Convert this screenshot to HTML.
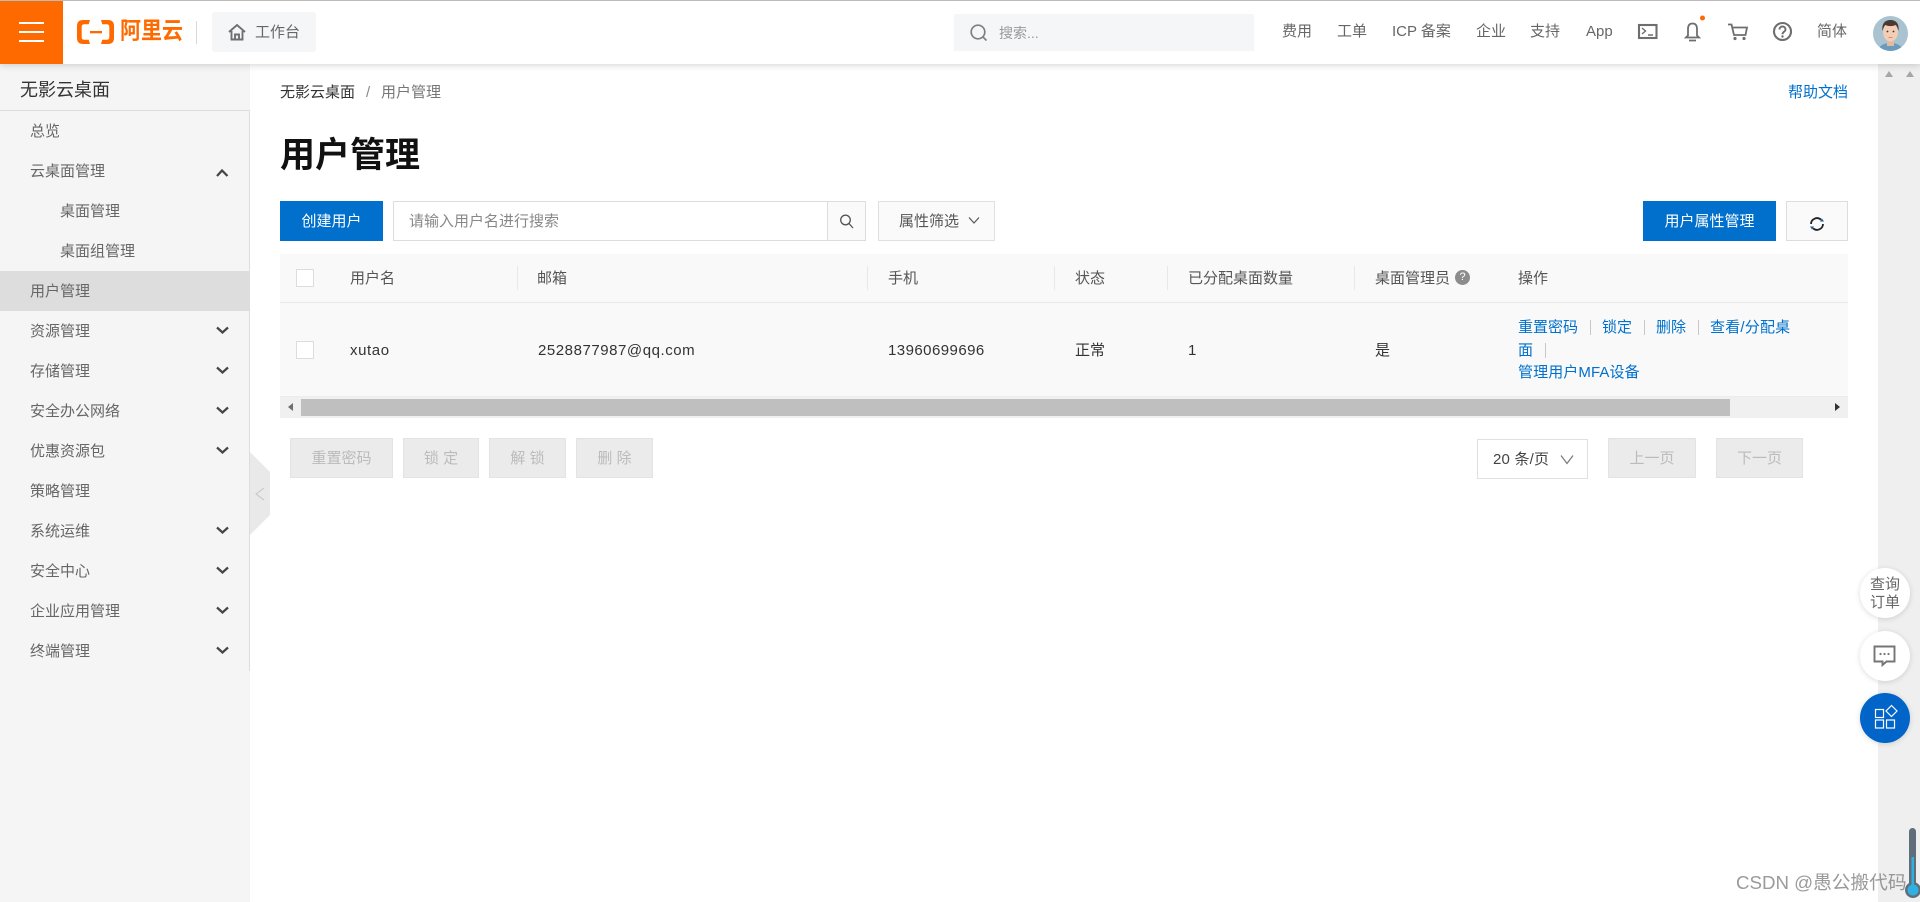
<!DOCTYPE html>
<html lang="zh-CN">
<head>
<meta charset="utf-8">
<title>用户管理</title>
<style>
*{box-sizing:border-box}
html,body{margin:0;padding:0;width:1920px;height:902px;overflow:hidden;background:#fff}
body{position:relative;font-family:"Liberation Sans","Noto Sans CJK SC",sans-serif;font-size:15px;color:#333}
.a{position:absolute}
.t{position:absolute;line-height:20px;height:20px;white-space:nowrap;margin-top:1px}
.b{position:absolute;text-align:center;white-space:nowrap;line-height:40px;height:40px;border:1px solid #e0e0e0}
.m{color:#666;left:30px}
.n{color:#666;top:21px}
.h{color:#555;top:268px}
.r{color:#333;top:340px}
.l{color:#0070cc}
.g{color:#aaa}
.sep{position:absolute;top:266px;width:1px;height:24px;background:#e8e8e8}
.dis{background:#ebebeb;border-color:#e3e3e3;color:#bbb}
.fab{position:absolute;left:1860px;width:50px;height:50px;border-radius:50%;background:#fff;box-shadow:0 1px 6px rgba(0,0,0,.14)}
</style>
</head>
<body>
<!-- right scroll strip -->
<div class="a" style="left:1878px;top:0;width:42px;height:902px;background:#efefef"></div>
<div class="a" style="left:1885px;top:71px;width:0;height:0;border:4.500px solid transparent;border-top:0;border-bottom:6px solid #a6a6a6"></div>
<div class="a" style="left:1906px;top:71px;width:0;height:0;border:4.500px solid transparent;border-top:0;border-bottom:6px solid #a6a6a6"></div>

<!-- sidebar -->
<div class="a" style="left:0;top:64px;width:250px;height:838px;background:#f5f5f5"></div>
<div class="a" style="left:249px;top:110px;width:1px;height:561px;background:#ddd"></div>
<div class="a" style="left:0;top:110px;width:250px;height:1px;background:#ddd"></div>
<div class="a" style="left:0;top:271px;width:250px;height:40px;background:#ddd"></div>
<div class="t" style="left:20px;top:78px;font-size:18px;line-height:22px;height:22px;color:#333">无影云桌面</div>
<div class="t m" style="top:121px">总览</div>
<div class="t m" style="top:161px">云桌面管理</div>
<div class="t m" style="top:201px;left:60px">桌面管理</div>
<div class="t m" style="top:241px;left:60px">桌面组管理</div>
<div class="t m" style="top:281px">用户管理</div>
<div class="t m" style="top:321px">资源管理</div>
<div class="t m" style="top:361px">存储管理</div>
<div class="t m" style="top:401px">安全办公网络</div>
<div class="t m" style="top:441px">优惠资源包</div>
<div class="t m" style="top:481px">策略管理</div>
<div class="t m" style="top:521px">系统运维</div>
<div class="t m" style="top:561px">安全中心</div>
<div class="t m" style="top:601px">企业应用管理</div>
<div class="t m" style="top:641px">终端管理</div>
<svg class="a" style="left:0;top:0" width="260" height="680" fill="none" stroke="#444" stroke-width="2.200">
<path d="M217 176l5-5.500 5.500 5.500"/>
<path d="M217 327.500l5.500 5 5.500-5M217 367.500l5.500 5 5.500-5M217 407.500l5.500 5 5.500-5M217 447.500l5.500 5 5.500-5M217 527.500l5.500 5 5.500-5M217 567.500l5.500 5 5.500-5M217 607.500l5.500 5 5.500-5M217 647.500l5.500 5 5.500-5"/>
</svg>
<svg class="a" style="left:250px;top:452px" width="20" height="84">
<path d="M0 0L20 20V63L0 83Z" fill="#e9e9e9"/>
<path d="M14 36l-8 6 8 6" fill="none" stroke="#c4c4c4" stroke-width="1"/>
</svg>

<!-- header -->
<div class="a" style="left:0;top:0;width:1920px;height:64px;background:#fff;border-top:1px solid #bbb;box-shadow:0 1px 7px rgba(0,0,0,.18)"></div>
<div class="a" style="left:0;top:1px;width:63px;height:63px;background:#ff6a00"></div>
<div class="a" style="left:19px;top:22px;width:25px;height:2px;background:#fff"></div>
<div class="a" style="left:19px;top:31px;width:25px;height:2px;background:#fff"></div>
<div class="a" style="left:19px;top:40px;width:25px;height:2px;background:#fff"></div>
<svg class="a" style="left:76px;top:18px" width="40" height="28" fill="#ff6a00">
<path d="M14 2H7C3 2 1 4 1 8v12c0 4 2 6 6 6h7l-1.300-4.200H8.500c-1.900 0-2.800-.9-2.800-2.800V9c0-1.900.9-2.800 2.800-2.800h4.200Z"/>
<path d="M25 2h7c4 0 6 2 6 6v12c0 4-2 6-6 6h-7l1.300-4.200h4.200c1.900 0 2.800-.9 2.800-2.800V9c0-1.900-.9-2.800-2.800-2.800h-4.200Z"/>
<rect x="14" y="13" width="12" height="2.300"/>
</svg>
<div style="position:absolute;left:120px;top:18px;font-size:21px;line-height:27px;height:27px;font-weight:bold;color:#ff6a00;white-space:nowrap;transform:scaleY(1.1);transform-origin:center">阿里云</div>
<div class="a" style="left:196px;top:21px;width:1px;height:23px;background:#d8d8d8"></div>
<div class="a" style="left:212px;top:12px;width:104px;height:40px;background:#f5f6f8;border-radius:3px"></div>
<svg class="a" style="left:227px;top:23px" width="20" height="18" fill="none" stroke="#707070" stroke-width="1.900">
<path d="M2 9L10 2l8 7M4.500 8v8.500h11V8M8 16.500v-5h4v5"/>
</svg>
<div class="t" style="left:255px;top:22px;color:#666">工作台</div>

<div class="a" style="left:954px;top:14px;width:300px;height:37px;background:#f5f6f8"></div>
<svg class="a" style="left:969px;top:23px" width="20" height="20" fill="none" stroke="#808080" stroke-width="1.700">
<circle cx="9" cy="9" r="6.800"/><path d="M14 14l3.500 3.500"/>
</svg>
<div class="t g" style="left:999px;top:22px;font-size:14px;color:#999">搜索...</div>

<div class="t n" style="left:1282px">费用</div>
<div class="t n" style="left:1337px">工单</div>
<div class="t n" style="left:1392px;font-size:15px">ICP 备案</div>
<div class="t n" style="left:1476px">企业</div>
<div class="t n" style="left:1530px">支持</div>
<div class="t n" style="left:1586px">App</div>
<div class="t n" style="left:1817px">简体</div>

<svg class="a" style="left:0;top:0" width="1920" height="64" fill="none" stroke="#6e6e6e" stroke-width="2.100">
<rect x="1639" y="25" width="17.500" height="13"/>
<path d="M1642 28l3.500 3-3.500 3M1648 35h5" stroke-width="1.400"/>
<path d="M1692.500 23.500c-3.300 0-4.500 2.500-4.500 5.500v6.500l-2 2h13l-2-2V29c0-3-1.200-5.500-4.500-5.500ZM1689 40.500h7" stroke-width="1.800"/>
<circle cx="1702.500" cy="18" r="2.500" fill="#ff6a00" stroke="none"/>
<path d="M1728 24.500h3.500l2.500 10.500h11.500l1.500-7.500h-15" stroke-width="1.800"/>
<circle cx="1735" cy="38.500" r="1.600" fill="#6e6e6e" stroke="none"/><circle cx="1744" cy="38.500" r="1.600" fill="#6e6e6e" stroke="none"/>
<circle cx="1782.500" cy="31.500" r="8.500"/>
<path d="M1779.500 29.500c0-4 6-4 6 0 0 2.300-3 2.300-3 4.700" stroke-width="1.900"/>
<circle cx="1782.500" cy="36.500" r="1.200" fill="#6e6e6e" stroke="none"/>
</svg>
<svg class="a" style="left:1873px;top:16px" width="35" height="35">
<defs><clipPath id="c"><circle cx="17.500" cy="17.500" r="17.500"/></clipPath></defs>
<g clip-path="url(#c)">
<rect width="35" height="35" fill="#a9c3d0"/>
<path d="M5 35c1-6 7-8 12.500-8s11.500 2 12.500 8Z" fill="#6a9bbd"/>
<rect x="14" y="22" width="7" height="8" fill="#e3b9a0"/>
<ellipse cx="17.500" cy="16" rx="7.500" ry="9.500" fill="#f3cdb5"/>
<path d="M9.500 15c-1-8 3-11 8-11s9 3 8 11c-1-3-1.500-5-3-6-3 1.500-7 1.500-10 0-1.500 1-2 3-3 6Z" fill="#4a3a33"/>
<circle cx="14.500" cy="15.500" r=".9" fill="#333"/><circle cx="20.500" cy="15.500" r=".9" fill="#333"/>
<path d="M15.500 21.500h4" stroke="#c0785f" stroke-width=".8"/>
</g>
</svg>

<!-- breadcrumb -->
<div class="t" style="left:280px;top:82px;color:#333">无影云桌面</div>
<div class="t" style="left:366px;top:82px;color:#888">/</div>
<div class="t" style="left:381px;top:82px;color:#777">用户管理</div>
<div class="t l" style="left:1788px;top:82px">帮助文档</div>

<div class="t" style="left:280px;top:133px;font-size:35px;line-height:44px;height:44px;font-weight:bold;color:#111">用户管理</div>

<!-- toolbar -->
<div class="b" style="left:280px;top:201px;width:103px;background:#0070cc;border-color:#0070cc;color:#fff">创建用户</div>
<div class="a" style="left:393px;top:201px;width:435px;height:40px;border:1px solid #ddd;background:#fff"></div>
<div class="t" style="left:409px;top:211px;color:#888">请输入用户名进行搜索</div>
<div class="a" style="left:827px;top:201px;width:39px;height:40px;border:1px solid #ddd;background:#fafafa"></div>
<svg class="a" style="left:838px;top:213px" width="18" height="18" fill="none" stroke="#555" stroke-width="1.300"><circle cx="7.500" cy="7" r="4.800"/><path d="M11 10.500l4 4.500"/></svg>
<div class="b" style="left:878px;top:201px;width:117px;background:#fafafa;color:#555;text-align:left;padding-left:20px">属性筛选</div>
<svg class="a" style="left:968px;top:216px" width="12" height="10" fill="none" stroke="#555" stroke-width="1.200"><path d="M1 1.500l5 5.500 5-5.500"/></svg>
<div class="b" style="left:1643px;top:201px;width:133px;background:#0070cc;border-color:#0070cc;color:#fff">用户属性管理</div>
<div class="a" style="left:1786px;top:201px;width:62px;height:40px;border:1px solid #ddd;background:#fafafa"></div>
<svg class="a" style="left:1808px;top:216px" width="18" height="16" fill="none" stroke="#222" stroke-width="1.800">
<path d="M3 8a6 6 0 0 1 10-4.300M15 8a6 6 0 0 1-10 4.300"/>
<path d="M12 5.500h4l-2-3Z M6 10.500H2l2 3Z" fill="#1c5e9e" stroke="none"/>
</svg>

<!-- table -->
<div class="a" style="left:280px;top:254px;width:1568px;height:142px;background:#f9f9f9"></div>
<div class="a" style="left:280px;top:302px;width:1568px;height:1px;background:#e8e8e8"></div>
<div class="a" style="left:280px;top:396px;width:1568px;height:1px;background:#ececec"></div>
<div class="a" style="left:296px;top:269px;width:18px;height:18px;background:#fff;border:1px solid #ddd"></div>
<div class="a" style="left:296px;top:341px;width:18px;height:18px;background:#fff;border:1px solid #ddd"></div>
<div class="t h" style="left:350px">用户名</div>
<div class="sep" style="left:517px"></div>
<div class="t h" style="left:537px">邮箱</div>
<div class="sep" style="left:867px"></div>
<div class="t h" style="left:888px">手机</div>
<div class="sep" style="left:1054px"></div>
<div class="t h" style="left:1075px">状态</div>
<div class="sep" style="left:1167px"></div>
<div class="t h" style="left:1188px">已分配桌面数量</div>
<div class="sep" style="left:1354px"></div>
<div class="t h" style="left:1375px">桌面管理员</div>
<div class="a" style="left:1455px;top:270px;width:15px;height:15px;border-radius:50%;background:#8c8c8c;color:#fff;font-size:11px;line-height:15px;text-align:center">?</div>
<div class="t h" style="left:1518px">操作</div>

<div class="t r" style="left:350px;letter-spacing:.6px">xutao</div>
<div class="t r" style="left:538px;letter-spacing:.55px">2528877987@qq.com</div>
<div class="t r" style="left:888px;letter-spacing:.45px">13960699696</div>
<div class="t r" style="left:1075px">正常</div>
<div class="t r" style="left:1188px">1</div>
<div class="t r" style="left:1375px">是</div>

<div class="t l" style="left:1518px;top:317px">重置密码</div>
<div class="a" style="left:1590px;top:320px;width:1px;height:15px;background:#c8c8c8"></div>
<div class="t l" style="left:1602px;top:317px">锁定</div>
<div class="a" style="left:1644px;top:320px;width:1px;height:15px;background:#c8c8c8"></div>
<div class="t l" style="left:1656px;top:317px">删除</div>
<div class="a" style="left:1698px;top:320px;width:1px;height:15px;background:#c8c8c8"></div>
<div class="t l" style="left:1710px;top:317px;letter-spacing:.2px">查看/分配桌</div>
<div class="t l" style="left:1518px;top:340px">面</div>
<div class="a" style="left:1545px;top:343px;width:1px;height:15px;background:#c8c8c8"></div>
<div class="t l" style="left:1518px;top:362px;letter-spacing:.1px">管理用户MFA设备</div>

<!-- h scrollbar -->
<div class="a" style="left:280px;top:397px;width:1568px;height:21px;background:#f0f0f0"></div>
<div class="a" style="left:301px;top:399px;width:1429px;height:17px;background:#bfbfbf"></div>
<div class="a" style="left:288px;top:403px;width:0;height:0;border:4.500px solid transparent;border-left:0;border-right:5px solid #6e6e6e"></div>
<div class="a" style="left:1835px;top:403px;width:0;height:0;border:4.500px solid transparent;border-right:0;border-left:5px solid #333"></div>

<!-- footer buttons -->
<div class="b dis" style="left:290px;top:438px;width:103px">重置密码</div>
<div class="b dis" style="left:403px;top:438px;width:76px">锁 定</div>
<div class="b dis" style="left:489px;top:438px;width:77px">解 锁</div>
<div class="b dis" style="left:576px;top:438px;width:77px">删 除</div>
<div class="b" style="left:1477px;top:439px;width:111px;background:#fff;color:#444;text-align:left;padding-left:15px;line-height:39px;letter-spacing:.2px">20 条/页</div>
<svg class="a" style="left:1560px;top:454px" width="14" height="12" fill="none" stroke="#777" stroke-width="1.200"><path d="M1 1.500l6 8 6-8"/></svg>
<div class="b dis" style="left:1608px;top:438px;width:88px">上一页</div>
<div class="b dis" style="left:1716px;top:438px;width:87px">下一页</div>

<!-- floating -->
<div class="fab" style="top:568px"></div>
<div class="a" style="left:1860px;top:576px;width:50px;text-align:center;font-size:15px;line-height:17.500px;color:#666">查询<br>订单</div>
<div class="fab" style="top:631px"></div>
<svg class="a" style="left:1872px;top:643px" width="26" height="26" fill="none" stroke="#757575" stroke-width="1.900">
<path d="M2.500 3.500h20v15h-8l-4 3.500v-3.500h-8Z"/>
<g fill="#757575" stroke="none"><circle cx="8.500" cy="11" r="1.100"/><circle cx="12.500" cy="11" r="1.100"/><circle cx="16.500" cy="11" r="1.100"/></g>
</svg>
<div class="fab" style="top:693px;background:#0064c8"></div>
<svg class="a" style="left:1873px;top:704px" width="26" height="28" fill="none" stroke="#fff" stroke-width="1.200">
<rect x="2.500" y="5.500" width="8" height="8"/><rect x="2.500" y="16" width="8" height="8"/><rect x="13.500" y="16" width="8" height="8"/>
<path d="M18.500 1.500l5.500 5.500-5.500 5.500-5.500-5.500Z"/>
</svg>

<!-- watermark + thermometer -->
<svg class="a" style="left:1900px;top:825px" width="20" height="77">
<rect x="9" y="3" width="7" height="58" rx="3.500" fill="#5f6e7b"/>
<circle cx="13" cy="65" r="8" fill="#5f6e7b"/>
<rect x="11.500" y="32" width="2.500" height="30" fill="#2fb0e0"/>
<circle cx="13" cy="65" r="5.500" fill="#2fb0e0"/>
</svg>
<div class="t" style="left:1736px;top:871px;font-size:18.700px;line-height:22px;height:22px;color:rgba(120,120,120,.75)">CSDN @愚公搬代码</div>
</body>
</html>
